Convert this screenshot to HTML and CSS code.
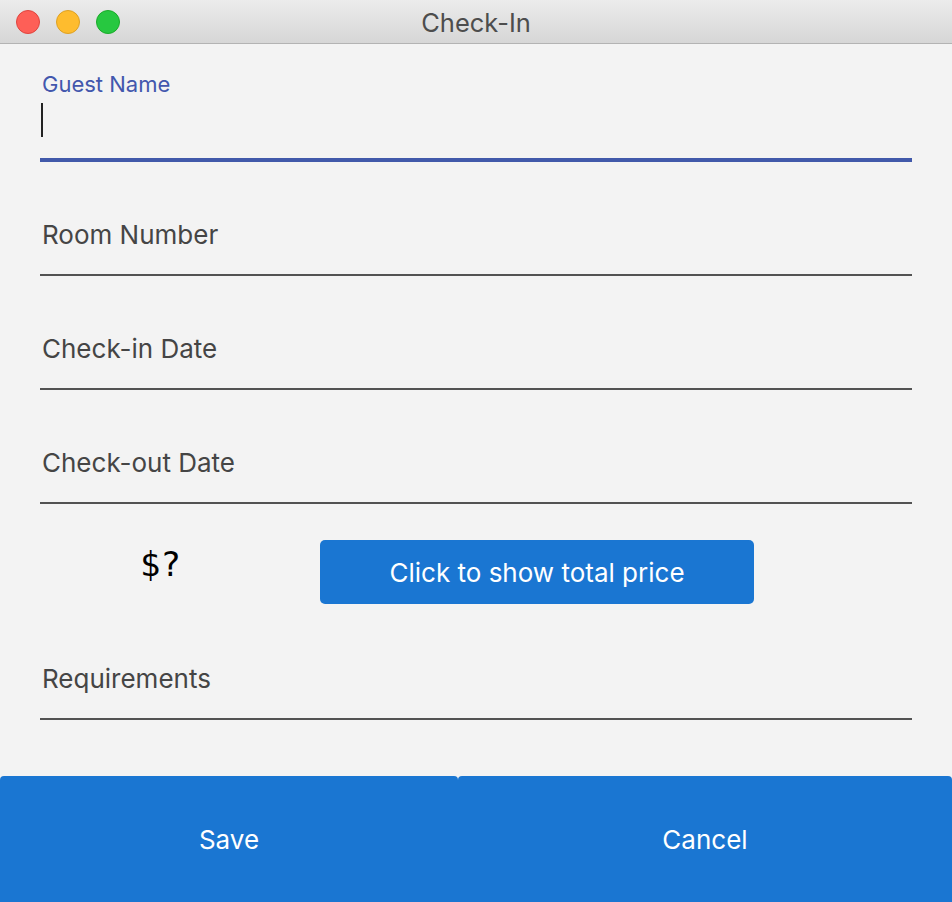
FILE: index.html
```html
<!DOCTYPE html>
<html lang="en">
<head>
<meta charset="utf-8">
<title>Check-In</title>
<link rel="stylesheet" href="styles.css">
</head>
<body>
<div class="window">
  <header class="titlebar">
    <div class="lights">
      <span class="light red"></span>
      <span class="light yellow"></span>
      <span class="light green"></span>
    </div>
    <div class="title">Check-In</div>
  </header>
  <main class="form">
    <div class="field focused">
      <div class="float-label">Guest Name</div>
      <div class="input"><span class="caret"></span></div>
    </div>
    <div class="field"><span class="prompt">Room Number</span></div>
    <div class="field"><span class="prompt">Check-in Date</span></div>
    <div class="field"><span class="prompt">Check-out Date</span></div>
    <div class="price-row">
      <div class="price">$?</div>
      <button class="btn price-btn">Click to show total price</button>
    </div>
    <div class="field req"><span class="prompt">Requirements</span></div>
  </main>
  <footer class="actions">
    <button class="btn action save">Save</button>
    <button class="btn action cancel">Cancel</button>
  </footer>
</div>
</body>
</html>
```
FILE: styles.css
```css
html, body {
  margin: 0;
  padding: 0;
  background: #f3f3f3;
}
body {
  font-family: Inter, "Liberation Sans", sans-serif;
}
.window {
  width: 952px;
  height: 902px;
  display: flex;
  flex-direction: column;
  background: #f3f3f3;
  overflow: hidden;
}
.titlebar {
  height: 43px;
  flex: none;
  border-bottom: 1px solid #b3b3b3;
  background: linear-gradient(#ececec, #d6d6d6);
  display: flex;
  align-items: center;
  position: relative;
  box-sizing: content-box;
}
.lights {
  display: flex;
  gap: 16px;
  padding-left: 16px;
  padding-top: 1px;
}
.light {
  width: 22px;
  height: 22px;
  border-radius: 50%;
  display: block;
}
.red { background: #fe5f57; border: 1px solid #e0443e; }
.yellow { background: #febc2e; border: 1px solid #dea123; }
.green { background: #27c840; border: 1px solid #1aab29; }
.title {
  position: absolute;
  left: 0;
  right: 0;
  top: 0;
  bottom: 0;
  display: flex;
  align-items: center;
  justify-content: center;
  font-size: 25.5px;
  color: #4d4d4d;
  padding-top: 2px;
}
.form {
  padding: 4px 40px 0;
  flex: 1;
}
.field {
  height: 114px;
  box-sizing: border-box;
  border-bottom: 2px solid #525252;
  display: flex;
  flex-direction: column;
  justify-content: flex-end;
  padding: 0 2px 23px;
}
.prompt {
  font-size: 26px;
  line-height: 32px;
  color: #454545;
}
.field.focused {
  border-bottom: 4px solid #4159aa;
  justify-content: flex-start;
  padding: 23px 1px 0;
}
.float-label {
  font-size: 22px;
  line-height: 26px;
  color: #4257ad;
  padding-left: 1px;
}
.input {
  margin-top: 6px;
  height: 34px;
  display: flex;
}
.caret {
  width: 2px;
  height: 34px;
  background: #222;
}
.price-row {
  display: flex;
  align-items: flex-start;
  margin-top: 36px;
  height: 64px;
}
.price {
  width: 240px;
  box-sizing: border-box;
  text-align: center;
  font-family: "DejaVu Sans Mono", monospace;
  font-size: 34px;
  line-height: 40px;
  padding-top: 4px;
  padding-left: 1px;
  color: #000;
}
.btn {
  font-family: Inter, "Liberation Sans", sans-serif;
  border: none;
  background: #1a76d2;
  color: #fff;
  font-size: 26px;
  margin: 0;
  padding: 0;
  cursor: pointer;
}
.price-btn {
  margin-left: 40px;
  width: 434px;
  height: 64px;
  border-radius: 5px;
}
.field.req {
  height: 116px;
}
.actions {
  display: flex;
  height: 126px;
  flex: none;
}
.action {
  height: 126px;
  border-radius: 4px 4px 0 0;
}
.save { width: 458px; }
.cancel { width: 494px; }
```
